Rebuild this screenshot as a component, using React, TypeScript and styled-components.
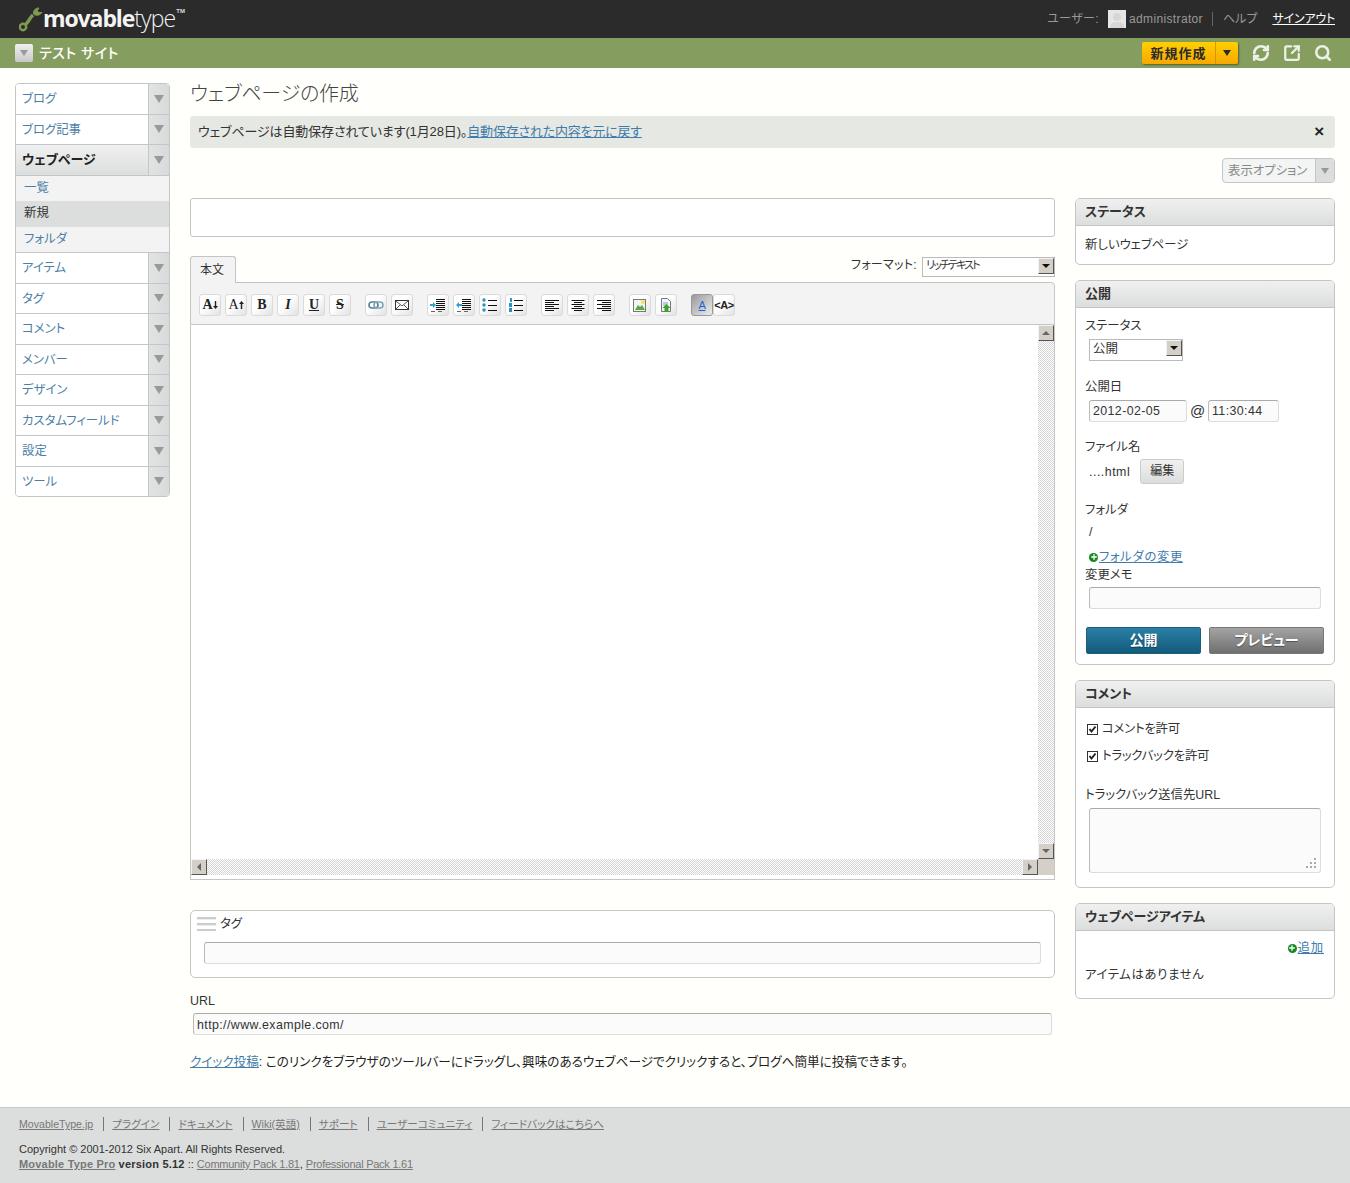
import React from 'react';
import styled, { createGlobalStyle } from 'styled-components';
import { RefreshCw, Search, SquareArrowOutUpRight, Plus } from 'lucide-react';

const GlobalStyle = createGlobalStyle`
  html, body {
    margin: 0;
    padding: 0;
    background: #fffffb;
  }
  body {
    font-family: "Liberation Sans", "Noto Sans CJK JP", sans-serif;
    font-size: 12.4px;
    line-height: 16px;
    color: #333;
    font-feature-settings: "palt";
  }
  * { box-sizing: border-box; }
  a { color: #3f7cab; text-decoration: underline; }
`;

// ヘッダー
const TopBar = styled.div`
  height: 38px;
  background: #2b2b2b;
  display: flex;
  align-items: center;
  justify-content: space-between;
  padding: 0 15px 0 19px;
`;

const Logo = styled.div`
  display: flex;
  align-items: flex-start;
  height: 38px;
  color: #fff;
`;

const LogoText = styled.span`
  font-family: "Open Sans", sans-serif;
  font-size: 23px;
  line-height: 37px;
  letter-spacing: -1.1px;
  font-weight: 700;
  margin-left: -1px;
  color: #f4f4f4;
  b { font-weight: 300; letter-spacing: -0.9px; }
`;

const LogoTm = styled.span`
  font-size: 6px;
  line-height: 8px;
  margin: 7px 0 0 1px;
  font-weight: bold;
  color: #ddd;
`;

const UserMenu = styled.div`
  display: flex;
  align-items: center;
  color: #999;
  font-size: 12px;
`;

const UserCaption = styled.span`
  letter-spacing: 0.4px;
`;

const Avatar = styled.span`
  width: 18px;
  height: 18px;
  margin: 0 3px 0 9px;
  background: #e6e6e6;
  display: flex;
  overflow: hidden;
`;

const UserName = styled.span`
  padding-right: 9px;
  border-right: 1px solid #666;
  margin-right: 10px;
  letter-spacing: 0.35px;
  line-height: 14px;
`;

const SignOut = styled.a`
  color: #fff;
  margin-left: 15px;
  letter-spacing: -0.2px;
`;

const SiteBar = styled.div`
  height: 30px;
  background: #859e5f;
  display: flex;
  align-items: center;
  padding: 0 15px;
`;

const SiteButton = styled.span`
  width: 18px;
  height: 18px;
  border-radius: 2px;
  background: linear-gradient(#f0f0f0, #c8c8c8);
  display: flex;
  align-items: center;
  justify-content: center;
`;

const SiteName = styled.span`
  color: #fff;
  font-size: 14px;
  font-weight: 500;
  letter-spacing: 0.5px;
  margin-left: 6px;
  flex: 1;
`;

const NewButton = styled.div`
  display: flex;
  width: 96px;
  height: 22px;
  border-radius: 2px;
  background: linear-gradient(#ffd000, #f7a800);
  box-shadow: 1px 1px 2px rgba(0, 0, 0, 0.4);
  margin-right: 14px;
  color: #2b2b2b;
  font-weight: 700;
  font-size: 13px;
`;

const NewLabel = styled.span`
  width: 74px;
  text-align: center;
  line-height: 23px;
  border-right: 1px solid #d99400;
  letter-spacing: 1px;
`;

const NewArrow = styled.span`
  flex: 1;
  display: flex;
  align-items: center;
  justify-content: center;
`;

const BarIcons = styled.div`
  display: flex;
  align-items: center;
  gap: 13px;
  color: #eef0e8;
  margin-right: 3px;
`;

// 下向き三角
const Tri = styled.i<{ $w: number; $c: string }>`
  display: block;
  width: 0;
  height: 0;
  border-left: ${(p) => p.$w}px solid transparent;
  border-right: ${(p) => p.$w}px solid transparent;
  border-top: ${(p) => p.$w * 1.6}px solid ${(p) => p.$c};
`;

// ページ本体
const Page = styled.div`
  display: flex;
  gap: 20px;
  padding: 15px 15px 0;
`;

const Nav = styled.div`
  width: 155px;
  flex: none;
  align-self: flex-start;
  border: 1px solid #c2c6ca;
  border-radius: 4px;
  overflow: hidden;
  background: #fff;
`;

const NavRow = styled.div<{ $active?: boolean }>`
  display: flex;
  height: 30.5px;
  border-bottom: 1px solid #c2c6ca;
  background: ${(p) => (p.$active ? 'linear-gradient(#f0f0f0, #dcdedd)' : '#fff')};
  &:last-child { border-bottom: 0; height: 29.6px; }
`;

const NavLabel = styled.a<{ $active?: boolean }>`
  flex: 1;
  padding-left: 6px;
  line-height: 30px;
  font-size: ${(p) => (p.$active ? 13 : 12.4)}px;
  font-weight: ${(p) => (p.$active ? 700 : 400)};
  color: ${(p) => (p.$active ? '#222' : '#4a7fa8')};
  text-decoration: none;
`;

const NavToggle = styled.span`
  width: 21px;
  border-left: 1px solid #c2c6ca;
  background: linear-gradient(90deg, #e2e4e4, #d8dada);
  display: flex;
  align-items: center;
  justify-content: center;
`;

const SubNav = styled.div`
  background: #f3f3f3;
  border-bottom: 1px solid #c2c6ca;
`;

const SubItem = styled.a<{ $current?: boolean }>`
  display: block;
  height: 25.5px;
  padding-left: 8px;
  line-height: 25px;
  text-decoration: none;
  color: ${(p) => (p.$current ? '#333' : '#4a7fa8')};
  background: ${(p) => (p.$current ? '#dcdedd' : 'transparent')};
`;

const Main = styled.div`
  flex: 1;
  min-width: 0;
`;

const PageTitle = styled.h1`
  margin: 0;
  height: 33px;
  padding-top: 1px;
  font-size: 20px;
  line-height: 20px;
  font-weight: 300;
  letter-spacing: -0.2px;
  color: #444;
`;

const Message = styled.div`
  height: 32px;
  border-radius: 3px;
  background: #e6e8e3;
  display: flex;
  align-items: center;
  justify-content: space-between;
  padding: 0 11px 0 8px;
  font-size: 13px;
  letter-spacing: -0.12px;
  color: #333;
  a { letter-spacing: -0.2px; }
`;

const CloseMark = styled.span`
  font-weight: 700;
  font-size: 17px;
  color: #222;
`;

const OptionsRow = styled.div`
  display: flex;
  justify-content: flex-end;
  margin-top: 10px;
`;

const Options = styled.div`
  width: 113px;
  height: 25px;
  display: flex;
  border: 1px solid #c2c6ca;
  border-radius: 4px;
  overflow: hidden;
  background: #f3f4f4;
  color: #888;
`;

const OptionsLabel = styled.span`
  flex: 1;
  padding-left: 5px;
  line-height: 24px;
`;

const OptionsToggle = styled.span`
  width: 19px;
  border-left: 1px solid #c2c6ca;
  background: #dcdedd;
  display: flex;
  align-items: center;
  justify-content: center;
`;

const Columns = styled.div`
  display: flex;
  gap: 20px;
  margin-top: 15px;
`;

const EditorColumn = styled.div`
  width: 865px;
  flex: none;
`;

const SideColumn = styled.div`
  width: 260px;
  flex: none;
  display: flex;
  flex-direction: column;
  gap: 15px;
`;

const TextInput = styled.input<{ $h?: number }>`
  display: block;
  width: 100%;
  height: ${(p) => p.$h || 22}px;
  border: 1px solid #ddd;
  border-top-color: #aaa;
  border-left-color: #bbb;
  border-radius: 3px;
  background: #fbfbfb;
  padding: 0 3px;
  font: inherit;
  color: #333;
  outline: none;
  letter-spacing: 0.4px;
`;

const TitleInput = styled(TextInput)`
  background: #fff;
  border-color: #c4c4c4;
`;

const UrlInput = styled(TextInput)`
  padding-top: 2px;
`;

const TabRow = styled.div`
  display: flex;
  justify-content: space-between;
  height: 26px;
  margin-top: 19px;
`;

const Tab = styled.div`
  width: 46px;
  height: 27px;
  border: 1px solid #c5c5c5;
  border-bottom: 0;
  border-radius: 3px 3px 0 0;
  background: #f3f3f3;
  padding-left: 9px;
  line-height: 26px;
  font-size: 12px;
  position: relative;
  z-index: 1;
`;

const FormatBox = styled.div`
  display: flex;
  align-items: flex-start;
  gap: 5px;
  font-size: 12px;
  padding-top: 1px;
  letter-spacing: 0.3px;
`;

const FakeSelect = styled.div<{ $w: number; $h?: number }>`
  width: ${(p) => p.$w}px;
  height: ${(p) => p.$h || 20}px;
  display: flex;
  justify-content: space-between;
  border: 1px solid #bbb;
  background: #fff;
  font-size: ${(p) => (p.$h ? 12.5 : 11)}px;
  letter-spacing: ${(p) => (p.$h ? 0 : -1.9)}px;
  line-height: ${(p) => (p.$h ? 18 : 14)}px;
  padding-left: 3px;
`;

const ClassicButton = styled.span`
  width: 16px;
  height: 16px;
  flex: none;
  background: #d4d0c8;
  border: 1px solid;
  border-color: #f4f2ee #555 #555 #f4f2ee;
  display: flex;
  align-items: center;
  justify-content: center;
`;

const ArrowGlyph = styled.i<{ $dir: 'up' | 'down' | 'left' | 'right'; $c?: string }>`
  display: block;
  width: 0;
  height: 0;
  border: 4px solid transparent;
  ${(p) => {
    const c = p.$c || '#666';
    if (p.$dir === 'up') return `border-bottom-color:${c};border-top-width:0;`;
    if (p.$dir === 'down') return `border-top-color:${c};border-bottom-width:0;`;
    if (p.$dir === 'left') return `border-right-color:${c};border-left-width:0;`;
    return `border-left-color:${c};border-right-width:0;`;
  }}
`;

const Toolbar = styled.div`
  height: 43px;
  border: 1px solid #c5c5c5;
  border-radius: 0 4px 0 0;
  background: #f3f3f3;
  display: flex;
  align-items: center;
  padding: 3px 0 0 8px;
`;

const ToolGroup = styled.div<{ $joined?: boolean }>`
  display: flex;
  gap: ${(p) => (p.$joined ? 0 : 4)}px;
  margin-right: 14px;
`;

const ToolButton = styled.span<{ $on?: boolean; $sans?: boolean; $thin?: boolean }>`
  width: 22px;
  height: 22px;
  flex: none;
  border: 1px solid ${(p) => (p.$on ? '#999' : '#dadada')};
  border-radius: 3px;
  background: ${(p) => (p.$on ? 'linear-gradient(135deg, #999, #eee)' : 'linear-gradient(135deg, #fff 40%, #e2e2e2)')};
  display: flex;
  align-items: center;
  justify-content: center;
  font-family: ${(p) => (p.$sans ? '"Liberation Sans", sans-serif' : '"Liberation Serif", serif')};
  font-weight: ${(p) => (p.$thin || p.$on ? 400 : 700)};
  font-size: ${(p) => (p.$sans ? 11 : 14)}px;
  letter-spacing: ${(p) => (p.$sans ? -0.5 : 0)}px;
  color: ${(p) => (p.$on ? '#1565d8' : '#222')};
`;

const EditorFrame = styled.div`
  height: 555px;
  border: 1px solid #c5c5c5;
  border-top: 0;
  background: #fff;
  padding-bottom: 4px;
  display: flex;
  flex-direction: column;
`;

const EditorTop = styled.div`
  flex: 1;
  display: flex;
  justify-content: flex-end;
  min-height: 0;
`;

const ScrollV = styled.div`
  width: 16px;
  display: flex;
  flex-direction: column;
  justify-content: space-between;
  background: repeating-conic-gradient(#d4d4d4 0 25%, #fff 0 50%) 0 0 / 2px 2px;
`;

const EditorBottom = styled.div`
  height: 16px;
  display: flex;
`;

const ScrollH = styled.div`
  flex: 1;
  display: flex;
  justify-content: space-between;
  background: repeating-conic-gradient(#d4d4d4 0 25%, #fff 0 50%) 0 0 / 2px 2px;
`;

const ScrollCorner = styled.span`
  width: 16px;
  background: #d4d0c8;
`;

const TagBox = styled.div`
  margin-top: 30px;
  height: 68px;
  border: 1px solid #c5c5c5;
  border-radius: 5px;
  background: #fff;
  padding: 5px 13px 0;
`;

const TagHead = styled.div`
  display: flex;
  align-items: center;
  gap: 4px;
  margin: 0 0 11px -7px;
  height: 15px;
`;

const TagHandle = styled.span`
  width: 19px;
  height: 14px;
  background: repeating-linear-gradient(#ccc 0 2px, #eee 2px 3px, #fff 3px 6px);
`;

const UrlLabel = styled.div`
  margin-top: 15px;
  line-height: 16px;
`;

const UrlField = styled.div`
  margin: 4px 3px 0;
`;

const QuickPost = styled.p`
  margin: 19px 0 0;
  font-size: 12.6px;
  line-height: 16px;
  color: #222;
`;

// サイドバーのウィジェット
const Widget = styled.div`
  border: 1px solid #c5c5c5;
  border-radius: 5px;
  background: #fff;
  overflow: hidden;
`;

const WidgetHead = styled.div`
  height: 27px;
  padding-left: 9px;
  background: linear-gradient(#f0f0f0, #dcdedd);
  border-bottom: 1px solid #c5c5c5;
  font-size: 13px;
  font-weight: 700;
  line-height: 25px;
  color: #333;
`;

const WidgetBody = styled.div<{ $h: number }>`
  height: ${(p) => p.$h}px;
  padding: 10px 10px 0 9px;
`;

const FieldLabel = styled.div<{ $top?: number }>`
  margin-top: ${(p) => p.$top || 0}px;
  line-height: 16px;
  color: #333;
`;

const EmptyNote = styled(FieldLabel)`
  letter-spacing: 0.6px;
`;

const Indented = styled.div<{ $top?: number }>`
  margin: ${(p) => p.$top || 0}px 0 0 4px;
  display: flex;
  align-items: center;
`;

const SmallInput = styled(TextInput)<{ $w: number }>`
  width: ${(p) => p.$w}px;
  flex: none;
`;

const AtMark = styled.span`
  width: 21px;
  text-align: center;
  font-size: 15px;
`;

const FileName = styled.span`
  letter-spacing: 0.5px;
`;

const EditButton = styled.span`
  width: 44px;
  height: 25px;
  margin-left: 10px;
  border: 1px solid #ccc;
  border-radius: 3px;
  background: linear-gradient(#f0f0f0, #dcdedd);
  text-align: center;
  line-height: 23px;
  font-size: 12px;
`;

const AddIcon = styled.span`
  width: 9px;
  height: 9px;
  border-radius: 50%;
  background: #138a1d;
  color: #fff;
  display: flex;
  align-items: center;
  justify-content: center;
  margin-right: 1px;
`;

const ChangeLink = styled.a`
  letter-spacing: 0.6px;
`;

const PublishRow = styled.div`
  display: flex;
  justify-content: space-between;
  margin: 18px 0 0 1px;
  width: 238px;
`;

const ActionButton = styled.span<{ $primary?: boolean }>`
  width: 115px;
  height: 27px;
  border-radius: 2px;
  border: 1px solid ${(p) => (p.$primary ? '#1d5d7d' : '#777')};
  background: ${(p) =>
    p.$primary ? 'linear-gradient(#2a7fa6, #125b7c)' : 'linear-gradient(#a4a4a4, #6f6f6f)'};
  color: #fff;
  font-weight: 700;
  text-align: center;
  line-height: 25px;
  font-size: 14px;
  text-shadow: 0 1px 1px rgba(0, 0, 0, 0.4);
`;

const CheckRow = styled.div<{ $top?: number }>`
  display: flex;
  align-items: center;
  gap: 4px;
  margin: ${(p) => p.$top || 0}px 0 0 2px;
  height: 16px;
  letter-spacing: -0.2px;
`;

const CheckBox = styled.span`
  width: 11px;
  height: 11px;
  border: 1px solid #333;
  background: #fff;
  display: flex;
`;

const TrackbackArea = styled.div`
  position: relative;
  margin: 5px 0 0 4px;
  width: 232px;
  height: 65px;
  border: 1px solid #ddd;
  border-top-color: #aaa;
  border-left-color: #bbb;
  border-radius: 3px;
  background: #fbfbfb;
`;

const ResizeGrip = styled.svg`
  position: absolute;
  right: 4px;
  bottom: 4px;
`;

const AddRow = styled.div`
  display: flex;
  justify-content: flex-end;
  align-items: center;
  height: 16px;
  margin-top: -1px;
  letter-spacing: 0.8px;
`;

const Footer = styled.div`
  margin-top: 37px;
  height: 77px;
  background: #dcdedd;
  border-top: 1px solid #c8caca;
  padding: 8px 19px 0;
  font-size: 11px;
  color: #333;
`;

const FooterLinks = styled.div`
  display: flex;
  align-items: center;
  height: 16px;
  font-size: 10.6px;
`;

const FooterLink = styled.a`
  color: #777;
`;

const FooterSep = styled.span`
  width: 1px;
  height: 14px;
  background: #777;
  margin: 0 8px 0 10px;
`;

const FooterLine = styled.div<{ $top?: number }>`
  margin-top: ${(p) => p.$top || 0}px;
  line-height: 15px;
  b { letter-spacing: 0.2px; }
  a { color: #777; }
`;

const PackLink = styled.a`
  letter-spacing: -0.25px;
`;

// アイコン
const WrenchLogo = () => (
  <svg width="25" height="26" viewBox="19 7 25 26" fill="none" stroke="#7f9a50" style={{ marginTop: 7 }}>
    <circle cx="23" cy="27" r="3.2" strokeWidth="2.4" />
    <path d="M25.5 24.5C29 21.5 29 18.5 33 15" strokeWidth="3.4" />
    <path d="M42 12.5c-3 3.5-6 3.5-8.5 1.5-.5-3 1.5-6 5.5-6l-2 3 2 1.5z" fill="#7f9a50" strokeWidth="1" />
  </svg>
);

const Silhouette = () => (
  <svg width="18" height="18" viewBox="0 0 18 18">
    <circle cx="9" cy="7" r="4" fill="#d6d6d6" />
    <path d="M2 18c0-5 3-6 7-6s7 1 7 6z" fill="#d6d6d6" />
  </svg>
);

const lineSet = (rows: [number, number, number][], color = '#111') =>
  rows.map(([x1, x2, y]) => <line key={`${x1}-${y}`} x1={x1} x2={x2} y1={y + 0.5} y2={y + 0.5} stroke={color} />);

const Svg16: React.FC<{ children: React.ReactNode }> = ({ children }) => (
  <svg width="16" height="16" viewBox="0 0 16 16" fill="none">
    {children}
  </svg>
);

const IndentIcon: React.FC<{ out?: boolean }> = ({ out }) => (
  <Svg16>
    {lineSet([[6, 15, 2], [6, 15, 4], [6, 15, 6], [6, 15, 8], [6, 15, 10], [6, 15, 12]])}
    {lineSet([[1, 5, 14], [8, 12, 14]], '#666')}
    <path d={out ? 'M6 7H3V5L0 8l3 3V9h3z' : 'M0 7h3V5l3 3-3 3V9H0z'} fill="#2fa0d0" />
  </Svg16>
);

const ListIcon: React.FC<{ ordered?: boolean }> = ({ ordered }) => (
  <Svg16>
    {lineSet([[6, 15, 3], [6, 15, 8], [6, 15, 13]])}
    {ordered ? (
      <g fill="#2f8fc0">
        <rect x="2" y="1" width="2" height="4" />
        <rect x="1" y="6" width="3" height="4" />
        <rect x="1" y="11" width="3" height="4" />
      </g>
    ) : (
      <g fill="#2f8fc0">
        <circle cx="2" cy="3" r="1.7" />
        <circle cx="2" cy="8" r="1.7" />
        <circle cx="2" cy="13" r="1.7" />
      </g>
    )}
  </Svg16>
);

const AlignIcon: React.FC<{ mode: 'l' | 'c' | 'r' }> = ({ mode }) => {
  const rows = [14, 9, 14, 9, 14, 9].map((w, i): [number, number, number] => {
    const wide = mode === 'c' ? w - 1 : w;
    const left = mode === 'l' ? 1 : mode === 'c' ? 8 - wide / 2 : 15 - wide;
    return [left, left + wide, 3 + i * 2];
  });
  return <Svg16>{lineSet(rows)}</Svg16>;
};

const LinkIcon = () => (
  <Svg16>
    <rect x="1" y="5" width="9" height="6" rx="3" stroke="#5a7f96" strokeWidth="1.6" />
    <rect x="6" y="5" width="9" height="6" rx="3" stroke="#7fa5bd" strokeWidth="1.6" />
  </Svg16>
);

const MailIcon = () => (
  <Svg16>
    <rect x="1.5" y="3.5" width="13" height="9" fill="#fff" stroke="#333" />
    <path d="M2 4l6 5 6-5M2 12l4-4M14 12l-4-4" stroke="#555" />
  </Svg16>
);

const ImageIcon = () => (
  <Svg16>
    <rect x="1.5" y="2.5" width="12" height="12" fill="#f4f4f4" stroke="#777" />
    <path d="M3 13l3-5 2 2 2-2 3 5z" fill="#5aa83c" />
    <circle cx="11" cy="5" r="2" fill="#f5e25a" />
  </Svg16>
);

const FileUpIcon = () => (
  <Svg16>
    <path d="M3.5 1.5h6l3 3v10h-9z" fill="#f4f6fa" stroke="#777" />
    <path d="M5 6h5M5 8h5" stroke="#7aa0d0" />
    <path d="M8.5 7l4 4h-2v4h-4v-4h-2z" fill="#3ea32a" />
  </Svg16>
);

const SizeIcon: React.FC<{ up?: boolean }> = ({ up }) => (
  <>
    <span>A</span>
    <svg width="5" height="8" viewBox="0 0 5 8">
      <path d={up ? 'M2.5 0L5 3H3.2v5H1.8V3H0z' : 'M2.5 8L5 5H3.2V0H1.8v5H0z'} fill="#222" />
    </svg>
  </>
);

const navTop = ['ブログ', 'ブログ記事'];
const navBottom = ['アイテム', 'タグ', 'コメント', 'メンバー', 'デザイン', 'カスタムフィールド', '設定', 'ツール'];
const footerLinks = ['MovableType.jp', 'プラグイン', 'ドキュメント', 'Wiki(英語)', 'サポート', 'ユーザーコミュニティ', 'フィードバックはこちらへ'];

const NavEntry: React.FC<{ label: string; active?: boolean }> = ({ label, active }) => (
  <NavRow $active={active}>
    <NavLabel $active={active} href="#">{label}</NavLabel>
    <NavToggle><Tri $w={5} $c="#999" /></NavToggle>
  </NavRow>
);

const AddMark = () => (
  <AddIcon><Plus size={8} strokeWidth={4} /></AddIcon>
);

const Check = () => (
  <svg width="9" height="9" viewBox="0 0 9 9">
    <path d="M1.5 4l2 2.5 4-5" fill="none" stroke="#222" strokeWidth="2" />
  </svg>
);

const App: React.FC = () => {
  return (
    <>
      <GlobalStyle />
      <TopBar>
        <Logo>
          <WrenchLogo />
          <LogoText>movable<b>type</b></LogoText>
          <LogoTm>TM</LogoTm>
        </Logo>
        <UserMenu>
          <UserCaption>ユーザー:</UserCaption>
          <Avatar><Silhouette /></Avatar>
          <UserName>administrator</UserName>
          ヘルプ
          <SignOut href="#">サインアウト</SignOut>
        </UserMenu>
      </TopBar>
      <SiteBar>
        <SiteButton><Tri $w={4} $c="#999" /></SiteButton>
        <SiteName>テスト サイト</SiteName>
        <NewButton>
          <NewLabel>新規作成</NewLabel>
          <NewArrow><Tri $w={4} $c="#2b2b2b" /></NewArrow>
        </NewButton>
        <BarIcons>
          <RefreshCw size={18} strokeWidth={3.6} />
          <SquareArrowOutUpRight size={18} strokeWidth={3} />
          <Search size={18} strokeWidth={3.4} />
        </BarIcons>
      </SiteBar>
      <Page>
        <Nav>
          {navTop.map((n) => <NavEntry key={n} label={n} />)}
          <NavEntry label="ウェブページ" active />
          <SubNav>
            <SubItem href="#">一覧</SubItem>
            <SubItem $current>新規</SubItem>
            <SubItem href="#">フォルダ</SubItem>
          </SubNav>
          {navBottom.map((n) => <NavEntry key={n} label={n} />)}
        </Nav>
        <Main>
          <PageTitle>ウェブページの作成</PageTitle>
          <Message>
            <span>ウェブページは自動保存されています(1月28日)。<a href="#">自動保存された内容を元に戻す</a></span>
            <CloseMark>×</CloseMark>
          </Message>
          <OptionsRow>
            <Options>
              <OptionsLabel>表示オプション</OptionsLabel>
              <OptionsToggle><Tri $w={4} $c="#999" /></OptionsToggle>
            </Options>
          </OptionsRow>
          <Columns>
            <EditorColumn>
              <TitleInput $h={39} />
              <TabRow>
                <Tab>本文</Tab>
                <FormatBox>
                  フォーマット:
                  <FakeSelect $w={133}>
                    リッチテキスト
                    <ClassicButton><ArrowGlyph $dir="down" $c="#111" /></ClassicButton>
                  </FakeSelect>
                </FormatBox>
              </TabRow>
              <Toolbar>
                <ToolGroup>
                  <ToolButton><SizeIcon /></ToolButton>
                  <ToolButton $thin><SizeIcon up /></ToolButton>
                  <ToolButton>B</ToolButton>
                  <ToolButton><i>I</i></ToolButton>
                  <ToolButton><u>U</u></ToolButton>
                  <ToolButton><s>S</s></ToolButton>
                </ToolGroup>
                <ToolGroup>
                  <ToolButton><LinkIcon /></ToolButton>
                  <ToolButton><MailIcon /></ToolButton>
                </ToolGroup>
                <ToolGroup>
                  <ToolButton><IndentIcon /></ToolButton>
                  <ToolButton><IndentIcon out /></ToolButton>
                  <ToolButton><ListIcon /></ToolButton>
                  <ToolButton><ListIcon ordered /></ToolButton>
                </ToolGroup>
                <ToolGroup>
                  <ToolButton><AlignIcon mode="l" /></ToolButton>
                  <ToolButton><AlignIcon mode="c" /></ToolButton>
                  <ToolButton><AlignIcon mode="r" /></ToolButton>
                </ToolGroup>
                <ToolGroup>
                  <ToolButton><ImageIcon /></ToolButton>
                  <ToolButton><FileUpIcon /></ToolButton>
                </ToolGroup>
                <ToolGroup $joined>
                  <ToolButton $on $sans><u>A</u></ToolButton>
                  <ToolButton $sans><b>{'<A>'}</b></ToolButton>
                </ToolGroup>
              </Toolbar>
              <EditorFrame>
                <EditorTop>
                  <ScrollV>
                    <ClassicButton><ArrowGlyph $dir="up" /></ClassicButton>
                    <ClassicButton><ArrowGlyph $dir="down" /></ClassicButton>
                  </ScrollV>
                </EditorTop>
                <EditorBottom>
                  <ScrollH>
                    <ClassicButton><ArrowGlyph $dir="left" /></ClassicButton>
                    <ClassicButton><ArrowGlyph $dir="right" /></ClassicButton>
                  </ScrollH>
                  <ScrollCorner />
                </EditorBottom>
              </EditorFrame>
              <TagBox>
                <TagHead>
                  <TagHandle />
                  タグ
                </TagHead>
                <TextInput />
              </TagBox>
              <UrlLabel>URL</UrlLabel>
              <UrlField><UrlInput defaultValue="http://www.example.com/" /></UrlField>
              <QuickPost>
                <a href="#">クイック投稿</a>: このリンクをブラウザのツールバーにドラッグし、興味のあるウェブページでクリックすると、ブログへ簡単に投稿できます。
              </QuickPost>
            </EditorColumn>
            <SideColumn>
              <Widget>
                <WidgetHead>ステータス</WidgetHead>
                <WidgetBody $h={38}>
                  <FieldLabel $top={1}>新しいウェブページ</FieldLabel>
                </WidgetBody>
              </Widget>
              <Widget>
                <WidgetHead>公開</WidgetHead>
                <WidgetBody $h={356}>
                  <FieldLabel>ステータス</FieldLabel>
                  <Indented $top={5}>
                    <FakeSelect $w={94} $h={22}>
                      公開
                      <ClassicButton><ArrowGlyph $dir="down" $c="#111" /></ClassicButton>
                    </FakeSelect>
                  </Indented>
                  <FieldLabel $top={18}>公開日</FieldLabel>
                  <Indented $top={5}>
                    <SmallInput $w={98} defaultValue="2012-02-05" />
                    <AtMark>@</AtMark>
                    <SmallInput $w={71} defaultValue="11:30:44" />
                  </Indented>
                  <FieldLabel $top={17}>ファイル名</FieldLabel>
                  <Indented $top={4}>
                    <FileName>....html</FileName>
                    <EditButton>編集</EditButton>
                  </Indented>
                  <FieldLabel $top={18}>フォルダ</FieldLabel>
                  <Indented $top={6}>/</Indented>
                  <Indented $top={9}>
                    <AddMark />
                    <ChangeLink href="#">フォルダの変更</ChangeLink>
                  </Indented>
                  <FieldLabel $top={2}>変更メモ</FieldLabel>
                  <Indented $top={4}><SmallInput $w={232} /></Indented>
                  <PublishRow>
                    <ActionButton $primary>公開</ActionButton>
                    <ActionButton>プレビュー</ActionButton>
                  </PublishRow>
                </WidgetBody>
              </Widget>
              <Widget>
                <WidgetHead>コメント</WidgetHead>
                <WidgetBody $h={179}>
                  <CheckRow $top={3}>
                    <CheckBox><Check /></CheckBox>
                    コメントを許可
                  </CheckRow>
                  <CheckRow $top={11}>
                    <CheckBox><Check /></CheckBox>
                    トラックバックを許可
                  </CheckRow>
                  <FieldLabel $top={23}>トラックバック送信先URL</FieldLabel>
                  <TrackbackArea>
                    <ResizeGrip width="10" height="10" viewBox="0 0 10 10">
                      <path d="M8 0h2v2H8zM4 4h2v2H4zM8 4h2v2H8zM0 8h2v2H0zM4 8h2v2H4zM8 8h2v2H8z" fill="#aaa" />
                    </ResizeGrip>
                  </TrackbackArea>
                </WidgetBody>
              </Widget>
              <Widget>
                <WidgetHead>ウェブページアイテム</WidgetHead>
                <WidgetBody $h={67}>
                  <AddRow>
                    <AddMark />
                    <a href="#">追加</a>
                  </AddRow>
                  <EmptyNote $top={11}>アイテムはありません</EmptyNote>
                </WidgetBody>
              </Widget>
            </SideColumn>
          </Columns>
        </Main>
      </Page>
      <Footer>
        <FooterLinks>
          {footerLinks.map((l, i) => (
            <React.Fragment key={l}>
              {i > 0 && <FooterSep />}
              <FooterLink href="#">{l}</FooterLink>
            </React.Fragment>
          ))}
        </FooterLinks>
        <FooterLine $top={10}>Copyright © 2001-2012 Six Apart. All Rights Reserved.</FooterLine>
        <FooterLine>
          <a href="#"><b>Movable Type Pro</b></a> <b>version 5.12</b> :: <PackLink href="#">Community Pack 1.81</PackLink>, <PackLink href="#">Professional Pack 1.61</PackLink>
        </FooterLine>
      </Footer>
    </>
  );
};

export default App;
